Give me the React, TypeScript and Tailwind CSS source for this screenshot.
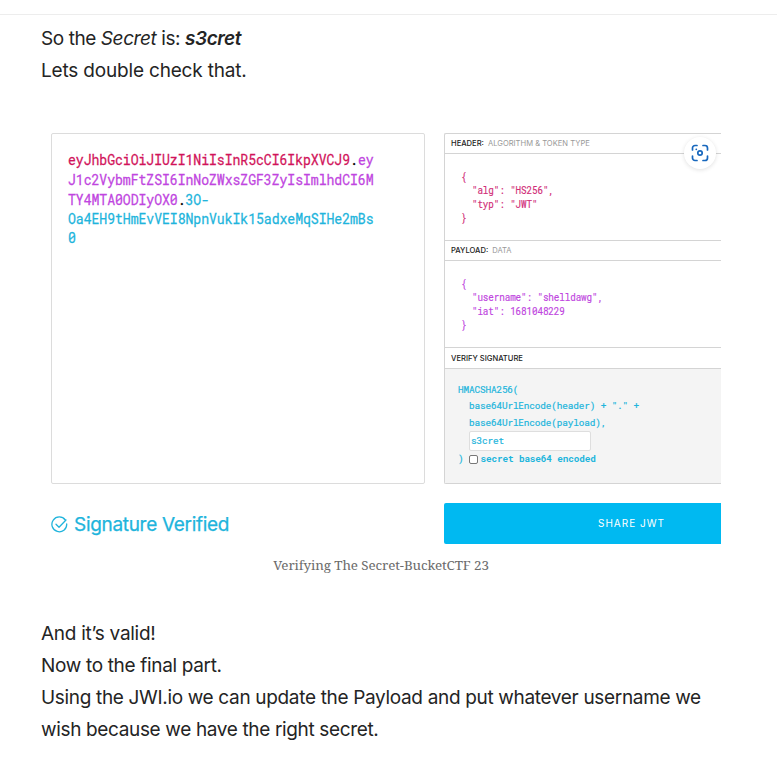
import type { ReactNode } from "react";

const mono = "font-['Roboto_Mono','DejaVu_Sans_Mono',monospace]";

function Bar({ label, note, className }: { label: string; note?: string; className: string }) {
  return (
    <div className={`flex shrink-0 items-center gap-1 border-b border-[#d4d4d4] pl-[6px] text-[7.6px] leading-none whitespace-pre ${className}`}>
      <span className="font-medium text-[#222]">{label}</span>
      {note && <span className="text-[#999]">{note}</span>}
    </div>
  );
}

function Code({ children, className }: { children: ReactNode; className: string }) {
  return (
    <pre className={`origin-top scale-y-110 font-['Roboto_Mono','DejaVu_Sans_Mono',monospace] text-[9.3px] leading-[12.45px] tracking-[-0.12px] [-webkit-text-stroke:0.15px] ${className}`}>
      {children}
    </pre>
  );
}

function ScanButton() {
  return (
    <div className="absolute top-[3px] right-[5px] flex h-8 w-8 items-center justify-center rounded-full bg-white shadow-[0_1px_4px_rgba(0,0,0,0.12)]">
      <svg width="18" height="18" viewBox="0 0 18 18" fill="none" stroke="#1767bd" strokeWidth="1.7" strokeLinecap="round">
        <path d="M1.500 6V4a2.500 2.500 0 0 1 2.500-2.500H6M12 1.500h2a2.500 2.500 0 0 1 2.500 2.500V6M16.500 12v2a2.500 2.500 0 0 1-2.500 2.500H12M6 16.500H4a2.500 2.500 0 0 1-2.500-2.500V12" />
        <circle cx="9" cy="9" r="2.200" />
        <circle cx="5.300" cy="5.300" r="0.900" fill="#1767bd" stroke="none" />
      </svg>
    </div>
  );
}

export default function App() {
  return (
    <main className="h-[766px] w-[777px] overflow-hidden bg-white pt-[14px] font-['Inter',sans-serif] text-[#242424]">
      <div className="h-px bg-[#ededed]" />
      <article className="ml-[41px] w-[680px]">
        <div className="pt-[8px] text-[19px] leading-8 whitespace-nowrap">
          <p className="tracking-[-0.42px]">
            So the <em>Secret</em> is: <strong className="font-semibold italic">s3cret</strong>
          </p>
          <p className="tracking-[-0.18px]">Lets double check that.</p>
        </div>

        <figure className="mt-[46px]">
          <div className="flex h-[351px] gap-[19px] pl-[10px]">
            <div className="w-[374px] shrink-0 rounded-[2px] border-[1.5px] border-[#dcdcdc] pt-[16.600px] pl-[16px]">
              <div className={`${mono} origin-top scale-y-110 text-[13.2px] leading-[17.82px] tracking-[-0.08px] whitespace-nowrap [-webkit-text-stroke:0.25px]`}>
                <div><span className="text-[#d1135a]">eyJhbGciOiJIUzI1NiIsInR5cCI6IkpXVCJ9</span><span className="text-black">.</span><span className="text-[#c045e0]">ey</span></div>
                <div className="text-[#c045e0]">J1c2VybmFtZSI6InNoZWxsZGF3ZyIsImlhdCI6M</div>
                <div><span className="text-[#c045e0]">TY4MTA0ODIyOX0</span><span className="text-black">.</span><span className="text-[#20b4dc]">3O-</span></div>
                <div className="text-[#20b4dc]">Oa4EH9tHmEvVEI8NpnVukIk15adxeMqSIHe2mBs</div>
                <div className="text-[#20b4dc]">0</div>
              </div>
            </div>
            <div className="relative flex min-w-0 flex-1 flex-col rounded-l-[2px] border border-r-0 border-[#d4d4d4]">
              <Bar className="h-[20px]" label="HEADER:" note="ALGORITHM & TOKEN TYPE" />
              <ScanButton />
              <div className="h-[87px] shrink-0 border-b border-[#d4d4d4] pt-[17px] pl-[16px]">
                <Code className="text-[#d12d78]">{'{\n  "alg": "HS256",\n  "typ": "JWT"\n}'}</Code>
              </div>
              <Bar className="h-[20px]" label="PAYLOAD:" note="DATA" />
              <div className="h-[87px] shrink-0 border-b border-[#d4d4d4] pt-[17px] pl-[16px]">
                <Code className="text-[#c045e0]">{'{\n  "username": "shelldawg",\n  "iat": 1681048229\n}'}</Code>
              </div>
              <Bar className="h-[21px] pt-[1px]" label="VERIFY SIGNATURE" />
              <div className={`${mono} flex-1 bg-[#f4f4f4] pt-[13px] pl-[13px] text-[9.4px] leading-[16.4px] tracking-[-0.14px] whitespace-pre text-[#20b4dc] [-webkit-text-stroke:0.2px]`}>
                <div>HMACSHA256(</div>
                <div className="pl-[11px]">{'base64UrlEncode(header) + "." +'}</div>
                <div className="pl-[11px]">base64UrlEncode(payload),</div>
                <div className="ml-[11px] h-[20px] w-[122px] rounded-[2px] border border-[#dedede] bg-white pl-[1px] leading-[18px]">s3cret</div>
                <div className="flex h-[16px] items-center">
                  <span>)</span>
                  <span className="ml-[5px] h-[9px] w-[9px] rounded-[2px] border border-[#777] bg-white" />
                  <span className="ml-[3px] font-bold [-webkit-text-stroke:0px]">secret base64 encoded</span>
                </div>
              </div>
            </div>
          </div>

          <div className="mt-[19px] flex h-[41px] pl-[10px] text-[#20b4dc]">
            <div className="flex w-[393px] shrink-0 items-center pt-[1px]">
              <svg width="17" height="17" viewBox="0 0 17 17" fill="none" stroke="currentColor" strokeWidth="1.300" strokeLinecap="round" strokeLinejoin="round">
                <path d="M14.300 4A7.400 7.400 0 1 0 15.700 8" />
                <path d="M5 8.200l3 3 7-7.200" />
              </svg>
              <span className="ml-[6px] pt-[2px] text-[19px] tracking-[-0.31px] whitespace-nowrap [-webkit-text-stroke:0.25px]">Signature Verified</span>
            </div>
            <div className="flex flex-1 items-center rounded-l-[2px] bg-[#00b9f1] pl-[154px] text-[10px] tracking-[1px] whitespace-nowrap text-white">SHARE JWT</div>
          </div>
          <figcaption className="mt-[11px] text-center font-['Noto_Serif','Source_Serif_4','Liberation_Serif',serif] text-[13.4px] leading-5 tracking-[-0.1px] text-[#6b6b6b]">
            Verifying The Secret-BucketCTF 23
          </figcaption>
        </figure>

        <div className="mt-[43px] text-[19px] leading-8 whitespace-nowrap">
          <p className="tracking-[-0.27px]">And it’s valid!</p>
          <p className="tracking-[-0.33px]">Now to the final part.</p>
          <p className="tracking-[-0.33px]">Using the JWI.io we can update the Payload and put whatever username we</p>
          <p className="tracking-[-0.35px]">wish because we have the right secret.</p>
        </div>
      </article>
    </main>
  );
}
